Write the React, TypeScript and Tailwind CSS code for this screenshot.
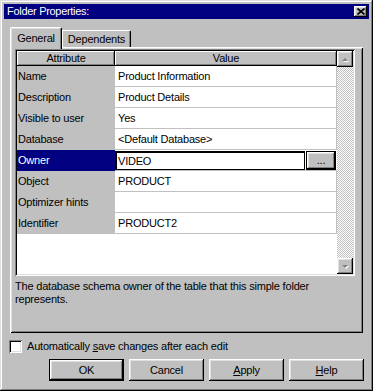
import React from "react";

const raised =
  "shadow-[inset_-1px_-1px_#000,inset_1px_1px_#fff,inset_-2px_-2px_#808080,inset_2px_2px_#dfdfdf]";
const headerRaised =
  "shadow-[inset_-1px_-1px_#000,inset_1px_1px_#fff,inset_-2px_-2px_#808080]";
const sunken =
  "shadow-[inset_1px_1px_#808080,inset_-1px_-1px_#fff,inset_2px_2px_#000,inset_-2px_-2px_#dfdfdf]";

const rows: { a: string; v: string }[] = [
  { a: "Name", v: "Product Information" },
  { a: "Description", v: "Product Details" },
  { a: "Visible to user", v: "Yes" },
  { a: "Database", v: "<Default Database>" },
  { a: "Owner", v: "VIDEO" },
  { a: "Object", v: "PRODUCT" },
  { a: "Optimizer hints", v: "" },
  { a: "Identifier", v: "PRODUCT2" },
];

function Arrow({ up }: { up: boolean }) {
  return (
    <svg width="8" height="5" viewBox="0 0 8 5">
      {up ? (
        <>
          <polygon points="4,1 7,4 1,4" fill="#fff" transform="translate(1,1)" />
          <polygon points="4,1 7,4 1,4" fill="#808080" />
        </>
      ) : (
        <>
          <polygon points="1,1 7,1 4,4" fill="#fff" transform="translate(1,1)" />
          <polygon points="1,1 7,1 4,4" fill="#808080" />
        </>
      )}
    </svg>
  );
}

function Button({
  children,
  isDefault,
}: {
  children: React.ReactNode;
  isDefault?: boolean;
}) {
  if (isDefault) {
    return (
      <div className="w-[75px] h-[22px] border border-black">
        <div className={`w-full h-full flex items-center justify-center ${raised}`}>
          {children}
        </div>
      </div>
    );
  }
  return (
    <div className={`w-[75px] h-[22px] flex items-center justify-center ${raised}`}>
      {children}
    </div>
  );
}

export default function App() {
  return (
    <div
      className={`w-[373px] h-[391px] bg-[#c0c0c0] p-[4px] flex flex-col text-black text-[11px] leading-[13px] tracking-[-0.2px] font-['Liberation_Sans',Arial,sans-serif] shadow-[inset_-1px_-1px_#000,inset_1px_1px_#dfdfdf,inset_-2px_-2px_#808080,inset_2px_2px_#fff]`}
    >
      {/* Title bar */}
      <div className="h-[15px] bg-[#000080] flex items-center justify-between pl-[3px] pr-[2px] text-white tracking-[-0.3px]">
        <span>Folder Properties:</span>
        <div className={`w-[13px] h-[11px] bg-[#c0c0c0] flex items-center justify-center ${raised}`}>
          <svg width="8" height="7" viewBox="0 0 8 7">
            <path d="M0.5 0.5 L7.5 6.5 M7.5 0.5 L0.5 6.5" stroke="#000" strokeWidth="1.6" />
          </svg>
        </div>
      </div>

      {/* Tabs + panel */}
      <div className="mt-[8px] pl-[6px]">
        <div className="h-[20px] flex items-end">
          <div className="relative z-10 w-[52px] h-[22px] -mb-[2px] bg-[#c0c0c0] border-t border-l border-r border-t-white border-l-white border-r-black rounded-tl-[2px] rounded-tr-[2px] shadow-[inset_-1px_0_#808080,inset_1px_1px_#dfdfdf] flex justify-center pt-[4px]">
            General
          </div>
          <div className="w-[69px] h-[17px] bg-[#c0c0c0] border-t border-l border-r border-t-white border-l-white border-r-black rounded-tr-[2px] shadow-[inset_-1px_0_#808080] flex items-center justify-center pt-[1px]">
            Dependents
          </div>
        </div>

        <div className="w-[353px] h-[286px] pt-[2px] pl-[5px] shadow-[inset_1px_1px_#fff,inset_-1px_-1px_#000,inset_2px_2px_#dfdfdf,inset_-2px_-2px_#808080]">
          {/* List */}
          <div className={`w-[340px] h-[227px] p-[2px] bg-white flex ${sunken}`}>
            <div className="flex-1 flex flex-col">
              <div className="h-[15px] flex bg-[#c0c0c0]">
                <div className={`w-[98px] h-full flex items-center justify-center ${headerRaised}`}>
                  Attribute
                </div>
                <div className={`flex-1 h-full flex items-center justify-center ${headerRaised}`}>
                  Value
                </div>
              </div>
              {rows.map((r) =>
                r.a === "Owner" ? (
                  <div key={r.a} className="h-[21px] flex">
                    <div className="w-[98px] h-full bg-[#000080] text-white flex items-center pl-[1px]">
                      {r.a}
                    </div>
                    <div className="flex-1 h-full flex bg-white pt-[1px] border-b border-[#c0c0c0]">
                      <div className="w-[190px] h-full border border-black border-l-2 border-t-2 bg-white flex items-center pl-[1px]">
                        {r.v}
                      </div>
                      <div className="ml-[1px] w-[30px] h-full border border-black">
                        <div className={`w-full h-full bg-[#c0c0c0] flex items-center justify-center ${raised}`}>
                          ...
                        </div>
                      </div>
                    </div>
                  </div>
                ) : (
                  <div key={r.a} className="h-[21px] flex">
                    <div className="w-[98px] h-full bg-[#c0c0c0] flex items-center pl-[1px]">
                      {r.a}
                    </div>
                    <div className="flex-1 h-full bg-white border-b border-r border-[#c0c0c0] flex items-center pl-[3px]">
                      {r.v}
                    </div>
                  </div>
                )
              )}
              <div className="flex-1 bg-white" />
            </div>
            {/* Scrollbar */}
            <div className="w-[16px] flex flex-col">
              <div className={`h-[16px] bg-[#c0c0c0] flex items-center justify-center ${raised}`}>
                <Arrow up />
              </div>
              <div className="flex-1 bg-[image:repeating-conic-gradient(#ffffff_0%_25%,#c0c0c0_0%_50%)] bg-[length:2px_2px]" />
              <div className={`h-[16px] bg-[#c0c0c0] flex items-center justify-center ${raised}`}>
                <Arrow up={false} />
              </div>
            </div>
          </div>
          <div className="mt-[4px]">
            The database schema owner of the table that this simple folder
            <br />
            represents.
          </div>
        </div>
      </div>

      {/* Checkbox */}
      <div className="mt-[7px] pl-[5px] flex items-center">
        <div className={`w-[13px] h-[13px] bg-white ${sunken}`} />
        <span className="ml-[5px]">
          Automatically <span className="underline">s</span>ave changes after each edit
        </span>
      </div>

      {/* Buttons */}
      <div className="mt-[6px] flex justify-end gap-[5px] pr-[5px]">
        <Button isDefault>OK</Button>
        <Button>Cancel</Button>
        <Button>
          <span>
            <span className="underline">A</span>pply
          </span>
        </Button>
        <Button>
          <span>
            <span className="underline">H</span>elp
          </span>
        </Button>
      </div>
    </div>
  );
}
